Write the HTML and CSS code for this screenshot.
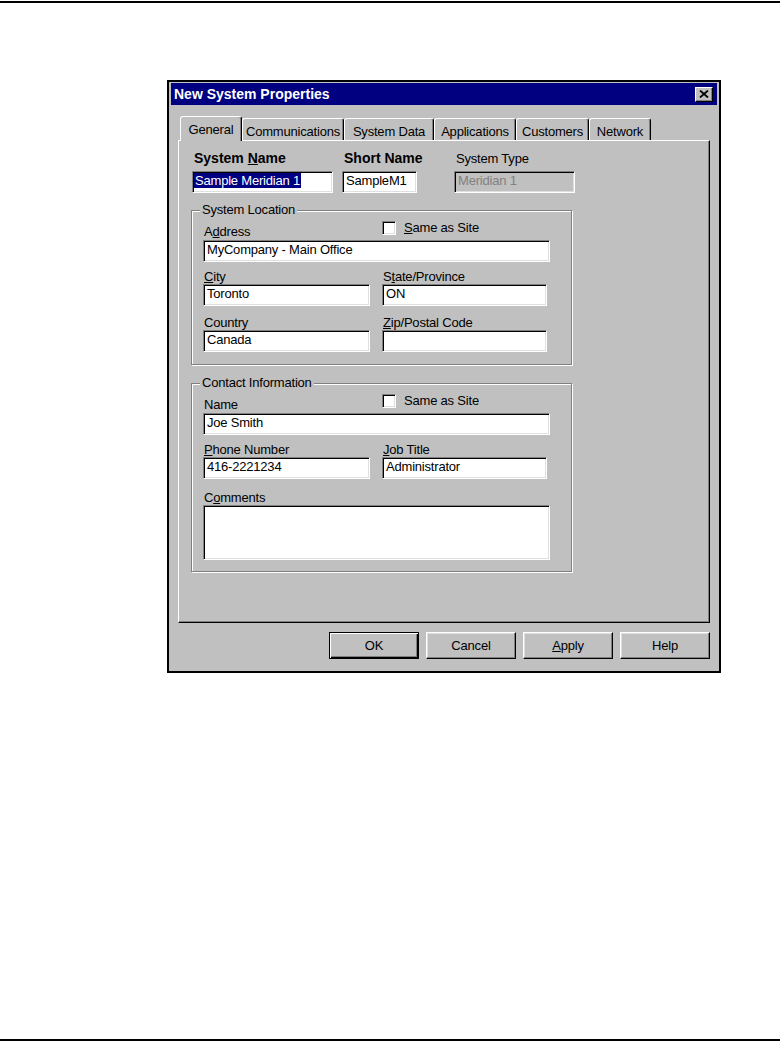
FILE: index.html
```html
<!DOCTYPE html>
<html lang="en">
<head>
  <meta charset="UTF-8" />
  <title>New System Properties</title>
  <link rel="stylesheet" href="styles.css">
</head>
<body>
<div class="page">
  <div class="dialog">
    <div class="titlebar">
      <span class="title">New System Properties</span>
      <span class="close-btn">
        <svg width="10" height="8" viewBox="0 0 10 8"><path d="M1 0.5 L9 7.5 M9 0.5 L1 7.5" stroke="#000" stroke-width="1.8" fill="none"/></svg>
      </span>
    </div>

    <div class="tabs">
      <div class="tab active w-general">General</div>
      <div class="tab w-comm">Communications</div>
      <div class="tab w-data">System Data</div>
      <div class="tab w-apps">Applications</div>
      <div class="tab w-cust">Customers</div>
      <div class="tab w-net">Network</div>
    </div>

    <div class="panel">
      <div class="top-row">
        <div class="w-name">
          <label class="bold">System <u>N</u>ame</label>
          <div class="box"><span class="sel">Sample Meridian 1</span></div>
        </div>
        <div class="w-short">
          <label class="bold">Short Name</label>
          <div class="box">SampleM1</div>
        </div>
        <div class="w-type">
          <label>System Type</label>
          <div class="box disabled">Meridian 1</div>
        </div>
      </div>

      <fieldset class="group">
        <legend>System Location</legend>
        <div class="head-row">
          <label>A<u>d</u>dress</label>
          <span class="check"><span class="checkbox"></span><u>S</u>ame as Site</span>
        </div>
        <div class="box wide">MyCompany - Main Office</div>
        <div class="grid">
          <div class="field">
            <label><u>C</u>ity</label>
            <div class="box">Toronto</div>
          </div>
          <div class="field">
            <label>S<u>t</u>ate/Province</label>
            <div class="box">ON</div>
          </div>
          <div class="field">
            <label>Country</label>
            <div class="box">Canada</div>
          </div>
          <div class="field">
            <label><u>Z</u>ip/Postal Code</label>
            <div class="box"></div>
          </div>
        </div>
      </fieldset>

      <fieldset class="group contact">
        <legend>Contact Information</legend>
        <div class="head-row">
          <label>Name</label>
          <span class="check"><span class="checkbox"></span>Same as Site</span>
        </div>
        <div class="box wide">Joe Smith</div>
        <div class="grid">
          <div class="field">
            <label><u>P</u>hone Number</label>
            <div class="box">416-2221234</div>
          </div>
          <div class="field">
            <label><u>J</u>ob Title</label>
            <div class="box">Administrator</div>
          </div>
        </div>
        <div class="comments">
          <label>C<u>o</u>mments</label>
          <div class="box wide memo"></div>
        </div>
      </fieldset>
    </div>

    <div class="buttons">
      <div class="btn default">OK</div>
      <div class="btn">Cancel</div>
      <div class="btn"><span><u>A</u>pply</span></div>
      <div class="btn">Help</div>
    </div>
  </div>
</div>
</body>
</html>
```

FILE: styles.css
```css
* { box-sizing: border-box; }
body {
  margin: 0;
  background: #fff;
  font-family: "Liberation Sans", Arial, sans-serif;
  font-size: 13px;
  letter-spacing: -0.2px;
  color: #000;
}
.page {
  margin-top: 1px;
  height: 1040px;
  border-top: 2px solid #000;
  border-bottom: 2px solid #000;
  padding: 77px 0 0 167px;
}
.dialog {
  width: 554px;
  height: 593px;
  border: 2px solid #000;
  background: #c0c0c0;
  padding: 1px 2px 12px;
}
.titlebar {
  height: 22px;
  background: #000080;
  color: #fff;
  display: flex;
  align-items: center;
  justify-content: space-between;
  padding: 0 4px 0 3px;
}
.title {
  font-weight: bold;
  font-size: 14px;
  letter-spacing: 0;
  line-height: 22px;
}
.close-btn {
  width: 18px;
  height: 15px;
  background: #c0c0c0;
  border: 1px solid;
  border-color: #fff #000 #000 #fff;
  box-shadow: inset -1px -1px #808080;
  display: flex;
  align-items: center;
  justify-content: center;
}
.close-btn svg { display: block; }

/* tabs */
.tabs {
  display: flex;
  align-items: flex-end;
  height: 24px;
  margin: 11px 7px 0;
  padding-left: 2px;
}
.tab {
  height: 22px;
  border: 1px solid;
  border-color: #fff #000 transparent #fff;
  border-bottom: 0;
  border-radius: 3px 3px 0 0;
  box-shadow: inset -1px 0 #808080;
  text-align: center;
  padding-top: 5px;
  line-height: 16px;
  white-space: nowrap;
}
.tab.active {
  height: 25px;
  margin-bottom: -1px;
  padding-top: 5px;
  background: #c0c0c0;
  z-index: 1;
}
.w-general { width: 62px; }
.w-comm { width: 102px; }
.w-data { width: 90px; }
.w-apps { width: 82px; }
.w-cust { width: 73px; }
.w-net { width: 62px; }

.panel {
  height: 483px;
  margin: 0 7px;
  border: 1px solid;
  border-color: #fff #000 #000 #fff;
  box-shadow: inset -1px -1px #808080;
  padding: 10px 0 0 12px;
}

/* fields */
.top-row {
  display: flex;
  margin-left: 1px;
}
.top-row label {
  display: block;
  line-height: 15px;
  margin-bottom: 5px;
  padding-left: 2px;
  white-space: nowrap;
}
.bold {
  font-weight: bold;
  font-size: 14px;
  letter-spacing: 0;
}
.w-name { width: 141px; margin-right: 9px; }
.w-short { width: 75px; margin-right: 37px; }
.w-type { width: 121px; }

.box {
  height: 22px;
  background: #fff;
  border: 1px solid;
  border-color: #808080 #fff #fff #808080;
  box-shadow: inset 1px 1px #000, inset -1px -1px #dfdfdf;
  padding: 0 3px 2px;
  line-height: 18px;
  white-space: nowrap;
  overflow: hidden;
}
.box.disabled {
  background: #c0c0c0;
  color: #808080;
}
.box.wide { width: 347px; }
.box.memo { height: 55px; }
.sel {
  background: #000080;
  color: #fff;
  margin-left: -2px;
  padding: 0 1px;
}

.group {
  margin: 10px 0 0;
  width: 381px;
  min-width: 0;
  border: 1px solid #808080;
  box-shadow: 1px 1px #fff, inset 1px 1px #fff;
  padding: 4px 21px 12px 11px;
}
.group.contact {
  margin-top: 11px;
  padding-bottom: 11px;
}
.group legend {
  padding: 0 2px;
  margin-left: -3px;
  line-height: 14px;
  background: #c0c0c0;
}
.head-row {
  display: flex;
  height: 19px;
}
.head-row > label {
  width: 179px;
  align-self: flex-end;
  line-height: 14px;
  margin-bottom: 1px;
  padding-left: 1px;
}
.check {
  display: flex;
  align-items: center;
  align-self: flex-start;
  line-height: 14px;
}
.checkbox {
  width: 14px;
  height: 14px;
  background: #fff;
  border: 1px solid;
  border-color: #808080 #fff #fff #808080;
  box-shadow: inset 1px 1px #000, inset -1px -1px #dfdfdf;
  margin-right: 8px;
}
.grid {
  display: grid;
  grid-template-columns: 167px 165px;
  column-gap: 12px;
  row-gap: 10px;
  margin-top: 8px;
}
.field label,
.comments label {
  display: block;
  line-height: 14px;
  padding-left: 1px;
}
.comments { margin-top: 12px; }

/* buttons */
.buttons {
  display: flex;
  justify-content: flex-end;
  gap: 7px;
  margin: 9px 7px 0 0;
}
.btn {
  width: 90px;
  height: 27px;
  border: 1px solid;
  border-color: #fff #000 #000 #fff;
  box-shadow: inset -1px -1px #808080, inset 1px 1px #dfdfdf;
  display: flex;
  align-items: center;
  justify-content: center;
}
.btn.default {
  border-color: #000;
  box-shadow: inset 1px 1px #fff, inset -1px -1px #000, inset -2px -2px #808080;
}
```
